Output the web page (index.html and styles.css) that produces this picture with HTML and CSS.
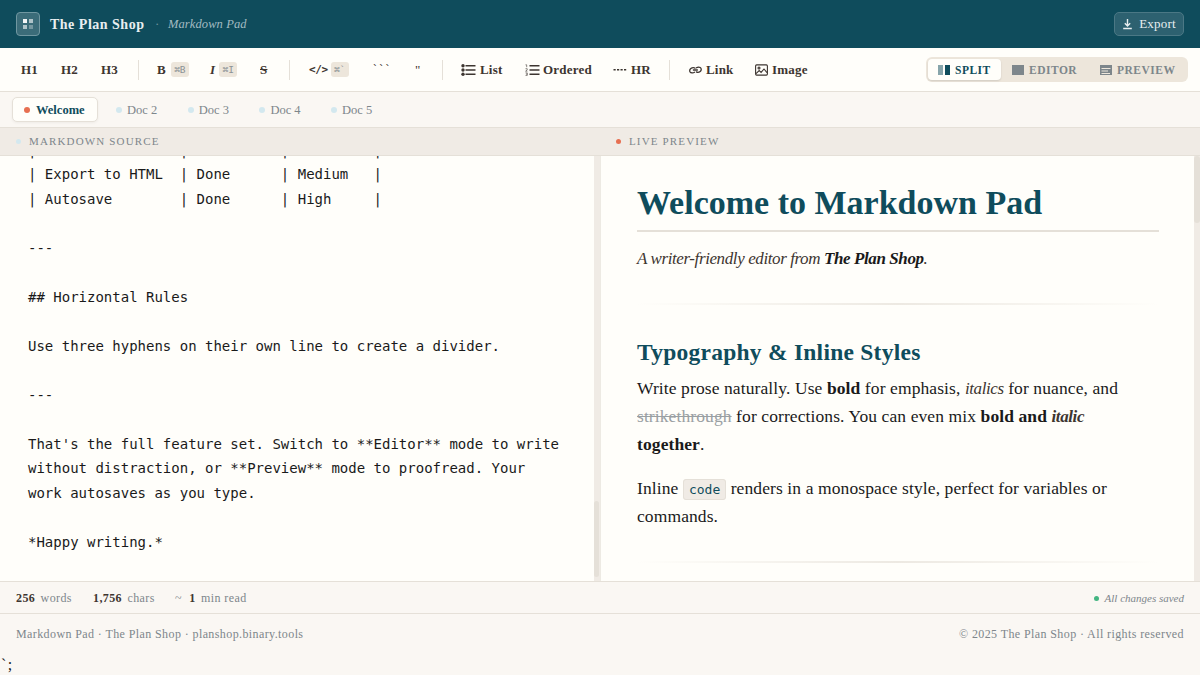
FILE: index.html
```
<!DOCTYPE html>
<html lang="en">
<head>
    <meta charset="UTF-8">
    <meta name="viewport" content="width=device-width, initial-scale=1.0">
    <title>Markdown Pad · The Plan Shop</title>
    <link rel="stylesheet" href="styles.css">
</head>
<body>
    <header class="header">
        <div class="brand">
            <div class="logo">
                <svg width="10" height="10" viewBox="0 0 10 10" fill="#fff">
                    <rect width="4" height="4" opacity=".95"/>
                    <rect x="6" width="4" height="4" opacity=".6"/>
                    <rect y="6" width="4" height="4" opacity=".6"/>
                    <rect x="6" y="6" width="4" height="4" opacity=".3"/>
                </svg>
            </div>
            <span class="brand-name">The Plan Shop</span>
            <span class="brand-dot">·</span>
            <span class="brand-sub">Markdown Pad</span>
        </div>
        <button class="export">
            <svg width="11" height="11" viewBox="0 0 11 11" fill="none" stroke="currentColor" stroke-width="1.4"><path d="M5.5 0V7M2.8 4.3L5.5 7L8.2 4.3M1.2 9.5H9.8"/></svg>
            <span>Export</span>
        </button>
    </header>

    <nav class="toolbar">
        <button class="btn heading">H1</button>
        <button class="btn heading">H2</button>
        <button class="btn heading">H3</button>
        <span class="sep"></span>
        <button class="btn bold-btn"><b>B</b><kbd>⌘B</kbd></button>
        <button class="btn italic-btn"><i>I</i><kbd>⌘I</kbd></button>
        <button class="btn strike-btn"><s>S</s></button>
        <span class="sep"></span>
        <button class="btn code-btn"><span class="mono">&lt;/&gt;</span><kbd>⌘`</kbd></button>
        <button class="btn fence-btn"><span class="mono">```</span></button>
        <button class="btn quote-btn"><span class="quote">"</span></button>
        <span class="sep"></span>
        <button class="btn list-btn">
            <svg width="15" height="12" viewBox="0 0 15 12" fill="currentColor"><circle cx="2" cy="1.8" r="1.7"/><circle cx="2" cy="6" r="1.7"/><circle cx="2" cy="10.2" r="1.7"/><path d="M4.5 1.1h10v1.5h-10zM4.5 5.3h10v1.5h-10zM4.5 9.5h10v1.5h-10z"/></svg>
            <span>List</span>
        </button>
        <button class="btn ordered-btn">
            <svg width="15" height="12" viewBox="0 0 15 12" fill="currentColor"><path d="M4.5 1.1h10v1.5h-10zM4.5 5.3h10v1.5h-10zM4.5 9.5h10v1.5h-10z"/><path d="M.5 .8h1.2v2.4M.5 4.7h1.7v1.2L.6 7.2h1.8M.5 8.9h1.8v2.5H.5M1 10.1h1.2" fill="none" stroke="currentColor" stroke-width=".6"/></svg>
            <span>Ordered</span>
        </button>
        <button class="btn hr-btn">
            <svg width="14" height="12" viewBox="0 0 14 12"><path d="M.5 5.7H13.3" stroke="currentColor" stroke-width="1.4" stroke-dasharray="2.2 1.3"/></svg>
            <span>HR</span>
        </button>
        <span class="sep"></span>
        <button class="btn link-btn">
            <svg width="13" height="12" viewBox="0 0 13 12" fill="none" stroke="currentColor" stroke-width="1.3" stroke-linecap="round"><path d="M4.4 6H8.4M5.5 8.3C4.2 9.3 1.9 9.2 1 7.8C.2 6.2 1.3 4.4 3 3.8C4.2 3.4 5.4 3.6 5.9 4.2M7.4 7.9C8.4 8.6 10 8.5 11.2 7.5C12.6 6.3 12.5 4.3 11.2 3.5C10 2.8 8.5 3.1 7.4 3.8"/></svg>
            <span>Link</span>
        </button>
        <button class="btn image-btn">
            <svg width="13" height="12" viewBox="0 0 13 12" fill="none" stroke="currentColor" stroke-width="1.1"><rect x=".6" y=".9" width="11.8" height="10.2" rx="1"/><circle cx="4" cy="4" r="1"/><path d="M1 9.6L4.2 6.6L6.1 8.4L9 5L12 8.6"/></svg>
            <span>Image</span>
        </button>

        <div class="views">
            <button class="view view-split active">
                <svg width="12" height="10" viewBox="0 0 12 10" fill="currentColor"><rect width="5" height="10" opacity=".5"/><rect x="7" width="5" height="10"/></svg>
                <span>SPLIT</span>
            </button>
            <button class="view view-editor">
                <svg width="12" height="10" viewBox="0 0 12 10" fill="currentColor"><rect width="12" height="10"/></svg>
                <span>EDITOR</span>
            </button>
            <button class="view view-preview">
                <svg width="12" height="10" viewBox="0 0 12 10"><rect width="12" height="10" fill="currentColor"/><path d="M1.5 3.5H10.5M1.5 6H8M1.5 8.5H10" stroke="#ede6db"/></svg>
                <span>PREVIEW</span>
            </button>
        </div>
    </nav>

    <div class="tabs">
        <div class="tab active"><span class="dot"></span><span class="tab-name">Welcome</span></div>
        <div class="tab"><span class="dot"></span><span class="tab-name">Doc 2</span></div>
        <div class="tab"><span class="dot"></span><span class="tab-name">Doc 3</span></div>
        <div class="tab"><span class="dot"></span><span class="tab-name">Doc 4</span></div>
        <div class="tab"><span class="dot"></span><span class="tab-name">Doc 5</span></div>
    </div>

    <main class="panes">
        <section class="pane pane-source">
            <div class="pane-head"><span class="dot"></span><span>MARKDOWN SOURCE</span></div>
            <div class="pane-body">
                <pre class="source">|                 |           |          |
| Export to HTML  | Done      | Medium   |
| Autosave        | Done      | High     |

---

## Horizontal Rules

Use three hyphens on their own line to create a divider.

---

That's the full feature set. Switch to **Editor** mode to write
without distraction, or **Preview** mode to proofread. Your
work autosaves as you type.

*Happy writing.*</pre>
                <div class="track track-end"><div class="thumb"></div></div>
            </div>
        </section>
        <section class="pane pane-preview">
            <div class="pane-head"><span class="dot"></span><span>LIVE PREVIEW</span></div>
            <div class="pane-body">
                <article class="preview">
                    <h1>Welcome to Markdown Pad</h1>
                    <p class="lead"><em>A writer-friendly editor from <strong>The Plan Shop</strong>.</em></p>
                    <hr>
                    <h2>Typography &amp; Inline Styles</h2>
                    <p>Write prose naturally. Use <strong>bold</strong> for emphasis, <em>italics</em> for nuance, and<br><del>strikethrough</del> for corrections. You can even mix <strong>bold and <em>italic</em><br>together</strong>.</p>
                    <p>Inline <code>code</code> renders in a monospace style, perfect for variables or<br>commands.</p>
                    <hr>
                </article>
                <div class="track"><div class="thumb"></div></div>
            </div>
        </section>
    </main>

    <div class="status">
        <div class="counts">
            <span class="words"><b>256</b> words</span>
            <span class="chars"><b>1,756</b> chars</span>
            <span class="read">~ <b>1</b> min read</span>
        </div>
        <div class="saved"><span class="dot"></span><span>All changes saved</span></div>
    </div>

    <footer class="footer">
        <span>Markdown Pad · The Plan Shop · planshop.binary.tools</span>
        <span>© 2025 The Plan Shop · All rights reserved</span>
    </footer>
    <div class="stray">`;</div>
</body>
</html>
```
FILE: styles.css
```
* {
    box-sizing: border-box;
}

body {
    margin: 0;
    height: 675px;
    overflow: hidden;
    display: flex;
    flex-direction: column;
    font-family: "Liberation Serif", serif;
    background-color: #faf7f3;
    color: #1a1a1a;
}

button {
    font-family: inherit;
    border: none;
    background: none;
    padding: 0;
    margin: 0;
    color: inherit;
}

svg {
    display: block;
    flex: none;
}

.dot {
    width: 6px;
    height: 6px;
    border-radius: 50%;
    background-color: #d3e8ef;
    flex: none;
}

/* Header */
.header {
    height: 48px;
    flex: none;
    padding: 0 16px;
    display: flex;
    align-items: center;
    justify-content: space-between;
    background-color: #0f4c5c;
    color: #fff;
}

.brand {
    display: flex;
    align-items: center;
}

.logo {
    width: 24px;
    height: 24px;
    border: 1px solid #7097a1;
    border-radius: 4px;
    background-color: #3b6c79;
    display: flex;
    align-items: center;
    justify-content: center;
}

.brand-name {
    width: 95px;
    margin-left: 10px;
    padding-top: 1px;
    font-size: 14px;
    font-weight: bold;
    letter-spacing: 0.5px;
    color: #e8eef0;
    white-space: nowrap;
}

.brand-dot {
    width: 4px;
    margin: 0 9px 0 10px;
    font-size: 13px;
    color: #6f949d;
}

.brand-sub {
    padding-top: 1px;
    font-size: 12.5px;
    font-style: italic;
    letter-spacing: 0.1px;
    color: #a3bbc2;
}

.export {
    width: 70px;
    height: 24px;
    border: 1px solid #4b7885;
    border-radius: 5px;
    background-color: #2d6170;
    display: flex;
    align-items: center;
    justify-content: center;
    gap: 6px;
    font-size: 13px;
    letter-spacing: 0.2px;
    color: #e8eef0;
}

/* Toolbar */
.toolbar {
    height: 44px;
    flex: none;
    padding: 0 12px 0 11px;
    display: flex;
    align-items: center;
    gap: 2px;
    background-color: #fffefa;
    border-bottom: 1px solid #e5e0d8;
}

.btn {
    height: 28px;
    padding-left: 10px;
    display: flex;
    align-items: center;
    gap: 4px;
    font-size: 13px;
    font-weight: bold;
    letter-spacing: 0.2px;
    color: #3d3530;
    white-space: nowrap;
}

.sep {
    width: 1px;
    height: 20px;
    margin: 0 7px;
    background-color: #e5e0d8;
}

.heading { width: 38px; }
.bold-btn { width: 51px; margin-left: -1px; gap: 5px; }
.italic-btn { width: 47px; }
.strike-btn { width: 31px; padding-left: 11px; }
.code-btn { width: 61px; }
.fence-btn { width: 40px; }
.quote-btn { width: 29px; }
.list-btn { width: 62px; padding-left: 9px; }
.ordered-btn { width: 87px; padding-left: 9px; gap: 3px; }
.hr-btn { width: 55px; padding-left: 8px; }
.link-btn { width: 64px; }
.image-btn { width: 74px; }

kbd {
    width: 18px;
    height: 15px;
    border-radius: 3px;
    background-color: #ede6db;
    font-family: "DejaVu Sans Mono", monospace;
    font-size: 9.5px;
    font-weight: normal;
    line-height: 15px;
    letter-spacing: 0;
    text-align: center;
    color: #8b9295;
}

.mono {
    font-family: "DejaVu Sans Mono", monospace;
    font-size: 11px;
    letter-spacing: -0.4px;
}

.code-btn .mono {
    margin-right: -1px;
}

.fence-btn .mono {
    font-weight: normal;
}

.quote {
    padding-left: 1px;
    font-weight: normal;
}

.views {
    width: 262px;
    height: 25px;
    margin-left: auto;
    padding: 2px;
    display: flex;
    border-radius: 6px;
    background-color: #ede6db;
}

.view {
    height: 21px;
    padding-left: 11px;
    display: flex;
    align-items: center;
    gap: 5px;
    border-radius: 4px;
    font-size: 11.5px;
    font-weight: bold;
    letter-spacing: 0.5px;
    line-height: 15px;
    color: #7d868b;
}

.view span {
    padding-top: 1px;
}

.view-split { width: 73px; padding-left: 10px; }
.view-editor { width: 88px; }

.view.active {
    background-color: #fffefa;
    color: #0f4c5c;
    box-shadow: 0 1px 2px rgba(0, 0, 0, 0.12);
}

/* Document tabs */
.tabs {
    height: 36px;
    flex: none;
    padding: 0 12px;
    display: flex;
    align-items: center;
    border-bottom: 1px solid #e5e0d8;
}

.tab {
    width: 71.7px;
    height: 25px;
    padding-left: 12px;
    display: flex;
    align-items: center;
    gap: 5px;
    font-size: 12.5px;
    color: #7d868b;
    white-space: nowrap;
}

.tab-name {
    padding-top: 2px;
}

.tab.active {
    width: 86px;
    margin-right: 6px;
    padding-left: 11px;
    gap: 6px;
    border: 1px solid #e5e0d8;
    border-radius: 5px;
    background-color: #fffefa;
    font-weight: bold;
    color: #0f4c5c;
    box-shadow: 0 1px 3px rgba(0, 0, 0, 0.05);
}

.tab.active .dot,
.pane-preview .dot {
    background-color: #e76f51;
}

/* Panes */
.panes {
    height: 453px;
    flex: none;
    display: flex;
}

.pane {
    width: 600px;
    display: flex;
    flex-direction: column;
}

.pane-head {
    height: 28px;
    flex: none;
    padding: 0 0 1px 16px;
    display: flex;
    align-items: center;
    gap: 8px;
    background-color: #f0ebe5;
    border-bottom: 1px solid #e5e0d8;
    font-size: 11px;
    letter-spacing: 1.15px;
    color: #7d868b;
}

.pane-head .dot {
    width: 5px;
    height: 5px;
}

.pane-body {
    height: 425px;
    display: flex;
    overflow: hidden;
    background-color: #fffefa;
}

.pane-preview .pane-body {
    border-left: 1px solid #edeae3;
}

/* scrolled to the end, so the first lines run out of the top */
.source {
    flex: 1;
    align-self: flex-end;
    margin: 0;
    padding: 0 0 27px 28px;
    font-family: "DejaVu Sans Mono", monospace;
    font-size: 14px;
    line-height: 24.5px;
}

.track {
    width: 6px;
    flex: none;
    display: flex;
    flex-direction: column;
    background-color: #f0ebe5;
}

.track-end {
    justify-content: flex-end;
    padding: 0 1px 4px 0;
}

.thumb {
    height: 67px;
    border-radius: 3px;
    background-color: #e5e0d8;
}

.track-end .thumb {
    height: 76px;
}

/* Rendered preview */
.preview {
    flex: 1;
    padding: 27px 35px 0 36px;
    font-size: 17.5px;
    line-height: 28px;
    letter-spacing: 0.1px;
    white-space: nowrap;
}

.preview h1 {
    margin: 0;
    height: 49px;
    border-bottom: 2px solid #e5e0d8;
    font-size: 34px;
    line-height: 40px;
    letter-spacing: 0;
    color: #0f4c5c;
}

.preview p {
    margin: 0 0 16px;
}

.preview .lead {
    margin-top: 12px;
}

.preview em {
    font-size: 17px;
    line-height: 1;
    letter-spacing: -0.4px;
    color: #3d3530;
}

.preview strong {
    line-height: 1;
    color: #1a1a1a;
}

.preview hr {
    height: 2px;
    margin: 31px 0;
    border: none;
    background: linear-gradient(to right, transparent, #ede9e2, transparent);
}

.preview h2 {
    margin: 0 0 6px;
    font-size: 23.5px;
    line-height: 32px;
    letter-spacing: 0.25px;
    color: #0f4c5c;
}

.preview del {
    color: #9aa0a3;
}

.preview code {
    padding: 2px 5px;
    border: 1px solid #e5e0d8;
    border-radius: 3px;
    background-color: #f0ebe5;
    font-family: "DejaVu Sans Mono", monospace;
    font-size: 13px;
    line-height: 1;
    letter-spacing: 0;
    color: #0f4c5c;
}

/* Status bar and footer */
.status {
    height: 33px;
    flex: none;
    padding: 1px 16px 0;
    display: flex;
    align-items: center;
    justify-content: space-between;
    border-top: 1px solid #e5e0d8;
    border-bottom: 1px solid #e5e0d8;
    font-size: 12px;
    letter-spacing: 0.4px;
    color: #7d868b;
}

.counts {
    display: flex;
}

.counts b {
    margin-right: 2px;
    color: #3d3530;
}

.read b {
    margin-left: 4px;
}

.words { width: 77px; }
.chars { width: 82px; }

.saved {
    display: flex;
    align-items: center;
    gap: 6px;
    font-size: 11px;
    font-style: italic;
    letter-spacing: 0;
}

.saved .dot {
    width: 5px;
    height: 5px;
    background-color: #43b581;
}

.footer {
    height: 41px;
    flex: none;
    padding: 0 16px;
    display: flex;
    align-items: center;
    justify-content: space-between;
    font-size: 12px;
    letter-spacing: 0.4px;
    color: #7d868b;
}

.stray {
    padding-left: 1px;
    font-size: 16px;
    line-height: 20px;
    letter-spacing: 1.5px;
}
```
